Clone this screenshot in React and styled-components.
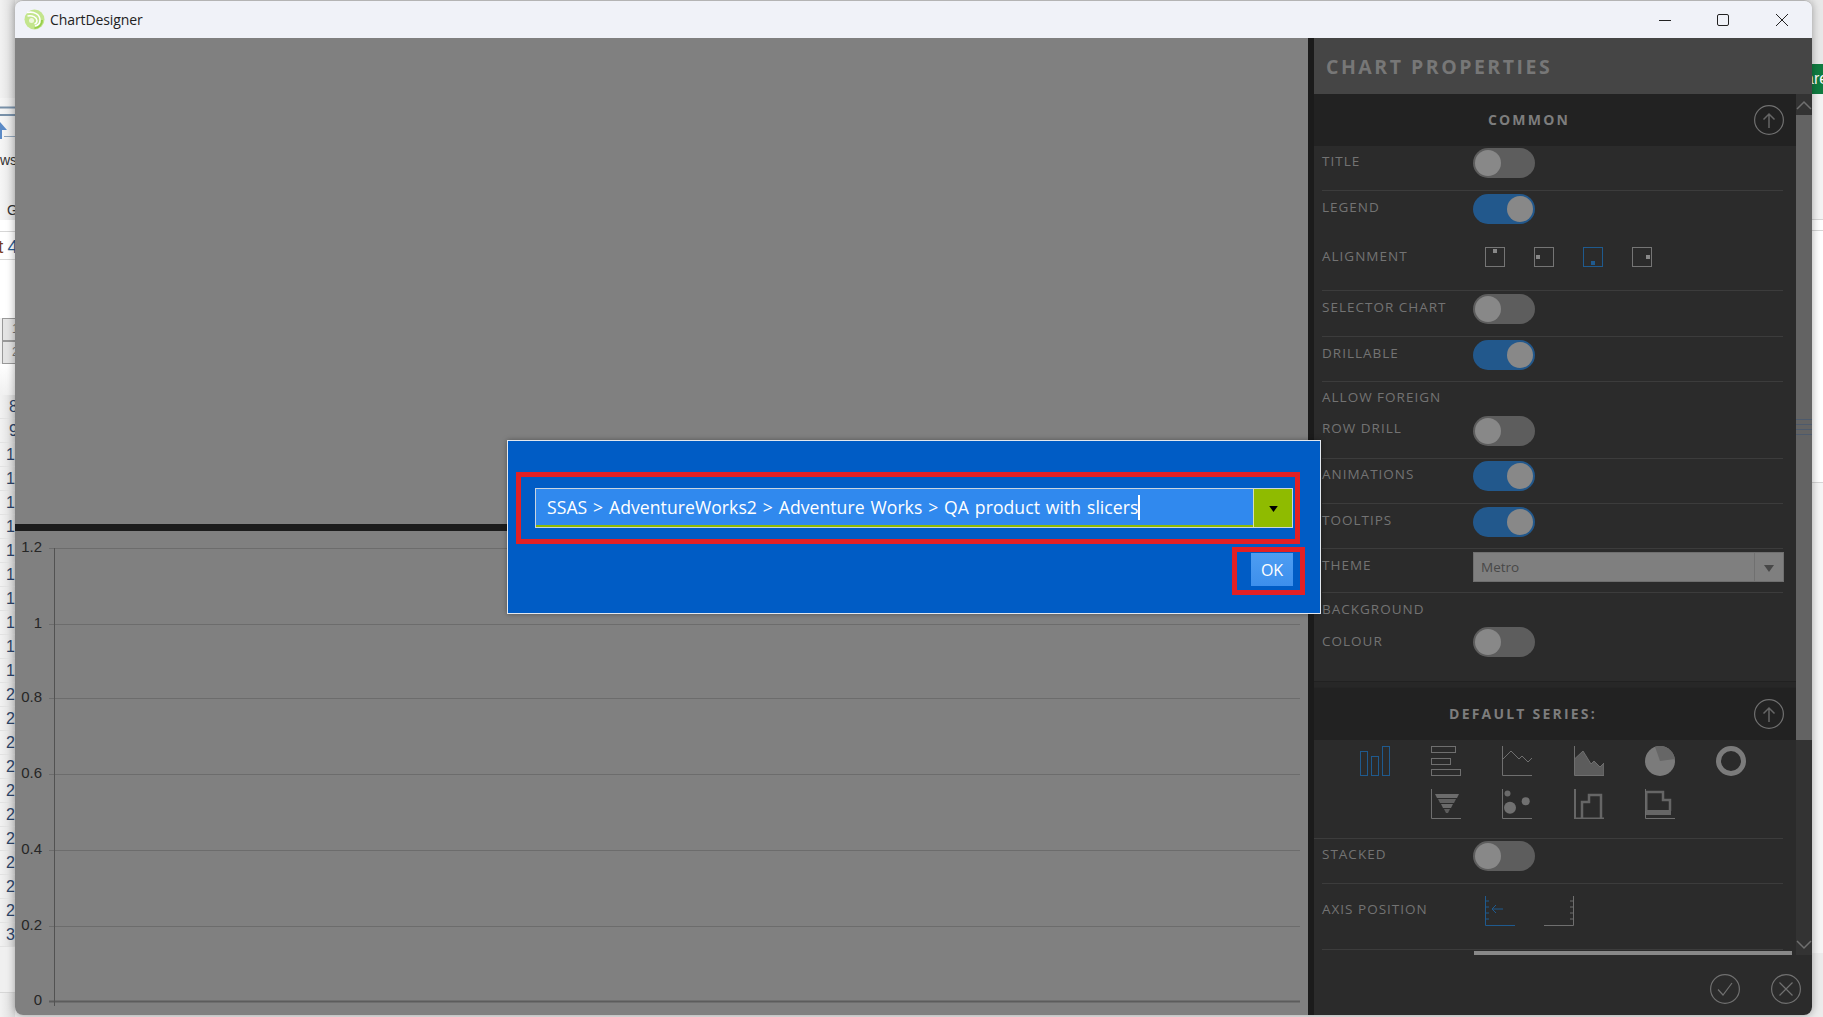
import React from 'react'
import styled, { createGlobalStyle } from 'styled-components'

const Global = createGlobalStyle`
  html, body { margin: 0; padding: 0; }
  body { background: #ececec; font-family: "Open Sans", "Noto Sans", sans-serif; overflow: hidden; }
  * { box-sizing: border-box; }
`

const Desktop = styled.div`
  display: flex;
  width: 1823px;
  height: 1017px;
  overflow: hidden;
`

/* bits of the app behind the window */
const LeftStrip = styled.div`
  width: 15px;
  flex: none;
  display: flex;
  flex-direction: column;
  overflow: hidden;
  font-family: "Liberation Sans", sans-serif;
  background: linear-gradient(90deg, #f2f2f2, #dcdcdc);
`

const StripGap = styled.div`
  height: ${p => p.$h}px;
  flex: none;
  background: ${p => p.$bg || 'transparent'};
  border-bottom: ${p => (p.$line ? '1px solid #d6d6d6' : 'none')};
`

const Ribbon = styled.div`
  height: 122px;
  flex: none;
  background: linear-gradient(90deg, #f6f6f6, #e4e4e4);
  display: flex;
  flex-direction: column;
  font-size: 14px;
  color: #333;
`

const RibbonIcon = styled.svg`
  flex: none;
`

const RibbonWord = styled.div`
  height: ${p => p.$h}px;
  flex: none;
  padding-left: ${p => p.$left}px;
  white-space: nowrap;
  line-height: 16px;
`

const TabText = styled.div`
  height: 28px;
  flex: none;
  background: #fff;
  border-bottom: 1px solid #d8d8d8;
  font-size: 19px;
  line-height: 30px;
  white-space: nowrap;
  text-indent: -2px;
  word-spacing: -1px;
  color: #7a3a1a;
  span { color: #2a5a90; }
`

const LevelBox = styled.div`
  height: 23px;
  flex: none;
  margin-left: 2px;
  border: 1px solid #999;
  border-right: none;
  background: #e4e4e4;
  color: #777;
  font-size: 12px;
  line-height: 21px;
  padding-left: 9px;
`

const RowNumber = styled.div`
  height: 24px;
  flex: none;
  padding-left: ${p => p.$left}px;
  border-bottom: 1px solid #e2e2e2;
  font-size: 16px;
  line-height: 24px;
  color: #2d4468;
  white-space: nowrap;
`

const RightStrip = styled.div`
  width: 11px;
  flex: none;
  display: flex;
  flex-direction: column;
  overflow: hidden;
  font-family: "Liberation Sans", sans-serif;
`

const GreenTab = styled.div`
  height: 30px;
  flex: none;
  background: #107c41;
  color: #fff;
  font-size: 16px;
  line-height: 30px;
  white-space: nowrap;
  text-indent: -7px;
`

/* window */
const Window = styled.div`
  width: 1797px;
  height: 1015px;
  flex: none;
  display: flex;
  flex-direction: column;
  border-top: 1px solid #b4b4b4;
  border-radius: 8px;
  overflow: hidden;
  box-shadow: 0 0 8px rgba(0, 0, 0, 0.35);
  position: relative;
  z-index: 1;
`

const TitleBar = styled.div`
  height: 37px;
  flex: none;
  display: flex;
  align-items: center;
  padding-left: 9px;
  background: #f0f2f8;
`

const AppName = styled.span`
  margin-left: 5px;
  font-size: 14px;
  color: #222;
  letter-spacing: -0.1px;
`

const Controls = styled.div`
  margin-left: auto;
  display: flex;
  align-items: center;
  gap: 46px;
  padding-right: 24px;
`

const CloseSlot = styled.span`
  display: flex;
  margin-left: 1px;
`

const Main = styled.div`
  flex: 1;
  display: flex;
  position: relative;
  min-height: 0;
`

const ChartArea = styled.div`
  width: 1293px;
  flex: none;
  display: flex;
  flex-direction: column;
  background: #808080;
`

const TopPane = styled.div`
  height: 486px;
  flex: none;
`

const Splitter = styled.div`
  height: 7px;
  flex: none;
  background: #1c1c1c;
`

/* properties panel */
const Panel = styled.div`
  flex: 1;
  display: flex;
  flex-direction: column;
  background: #2b2b2b;
  border-left: 6px solid #1b1b1b;
  color: #757575;
`

const PanelHeader = styled.div`
  height: 56px;
  flex: none;
  padding-left: 12px;
  background: #454545;
  font-size: 19.5px;
  font-weight: 700;
  letter-spacing: 2.5px;
  line-height: 57px;
  color: #777;
`

const PanelBody = styled.div`
  height: 861px;
  flex: none;
  display: flex;
`

const Content = styled.div`
  width: 482px;
  flex: none;
  display: flex;
  flex-direction: column;
`

const SectionHead = styled.div`
  height: 52px;
  flex: none;
  display: flex;
  align-items: center;
  padding-right: 12px;
  background: #222;
`

const SectionTitle = styled.div`
  flex: 1;
  margin-top: -2px;
  padding-right: ${p => p.$shift}px;
  text-align: center;
  font-size: 14px;
  font-weight: 700;
  letter-spacing: 2.2px;
  color: #7d7d7d;
`

const SectionGap = styled.div`
  height: 7px;
  flex: none;
  background: #272727;
  border-top: 1px solid #212121;
  border-bottom: 1px solid #252525;
`

const Row = styled.div`
  height: ${p => p.$h}px;
  flex: none;
  display: flex;
  align-items: flex-start;
  margin: 0 13px 0 8px;
  padding-top: ${p => p.$pt || 0}px;
  border-bottom: ${p => (p.$plain ? 'none' : '1px solid #3c3c3c')};
`

const Label = styled.div`
  width: 151px;
  flex: none;
  font-size: 13.5px;
  line-height: ${p => p.$lh || 27}px;
  letter-spacing: 1px;
  color: #737373;
  white-space: nowrap;
`

const Toggle = styled.div`
  width: 62px;
  height: 30px;
  flex: none;
  display: flex;
  align-items: center;
  justify-content: ${p => (p.$on ? 'flex-end' : 'flex-start')};
  margin-top: ${p => p.$top || 0}px;
  padding: 0 2px;
  border-radius: 15px;
  background: ${p => (p.$on ? '#22588c' : '#5d5d5d')};
`

const Knob = styled.div`
  width: 26px;
  height: 26px;
  border-radius: 50%;
  background: #888;
`

const IconRow = styled.div`
  display: flex;
  gap: ${p => p.$gap}px;
  margin: ${p => p.$top || 0}px 0 0 12px;
`

const Select = styled.div`
  width: 311px;
  height: 30px;
  flex: none;
  display: flex;
  background: #7f7f7f;
  border: 1px solid #6f6f6f;
  color: #484848;
  font-size: 13.5px;
  line-height: 28px;
`

const SelectValue = styled.div`
  flex: 1;
  padding-left: 7px;
`

const SelectArrow = styled.div`
  width: 29px;
  flex: none;
  display: flex;
  align-items: center;
  justify-content: center;
  padding-top: 3px;
  border-left: 1px solid #707070;
`

const SeriesGrid = styled.div`
  height: 99px;
  flex: none;
  display: grid;
  grid-template-columns: repeat(6, 71.2px);
  grid-auto-rows: 30px;
  row-gap: 13px;
  padding: 6px 0 0 46px;
  margin-right: 13px;
  border-bottom: 1px solid #3c3c3c;
`

const SeriesCell = styled.div`
  grid-column: ${p => p.$col};
  display: flex;
`

const HScroll = styled.div`
  width: 318px;
  height: 4px;
  flex: none;
  margin: 1px 0 0 160px;
  background: #888;
`

const VScroll = styled.div`
  width: 16px;
  flex: none;
  display: flex;
  flex-direction: column;
  background: #333;
`

const ScrollArrow = styled.div`
  height: 21px;
  flex: none;
  display: flex;
  align-items: center;
  justify-content: center;
  margin-top: ${p => (p.$end ? 'auto' : '0')};
`

const Thumb = styled.div`
  height: 625px;
  flex: none;
  display: flex;
  align-items: center;
  background: #636363;
`

const Grip = styled.div`
  width: 100%;
  height: 17px;
  background: repeating-linear-gradient(180deg, #4d5a6c 0 1px, transparent 1px 5px);
`

const PanelFooter = styled.div`
  flex: 1;
  display: flex;
  justify-content: flex-end;
  gap: 31px;
  padding: 19px 11px 0 0;
`

/* connection dialog */
const Dialog = styled.div`
  position: absolute;
  left: 492px;
  top: 402px;
  width: 814px;
  height: 174px;
  display: flex;
  flex-direction: column;
  align-items: flex-start;
  padding: 31px 0 0 8px;
  background: #005cc5;
  border: 1px solid #e4e8ee;
  box-shadow: 0 0 5px rgba(0, 0, 0, 0.35);
`

const Callout = styled.div`
  width: ${p => p.$w}px;
  height: ${p => p.$h}px;
  flex: none;
  display: flex;
  border: 5px solid #e32024;
`

const ComboWrap = styled(Callout)`
  align-items: center;
  padding: 0 2px 0 14px;
`

const OkWrap = styled(Callout)`
  align-self: flex-end;
  justify-content: flex-end;
  margin: 3px 15px 0 0;
  padding: 1px 7px 0 0;
`

const Combo = styled.div`
  width: 758px;
  height: 40px;
  display: flex;
  border: 1px solid #c9d4e0;
`

const ComboText = styled.div`
  flex: 1;
  display: flex;
  align-items: center;
  padding-left: 11px;
  background: #3089ee;
  border-bottom: 2px solid #8fbb00;
  color: #fff;
  font-size: 17.6px;
  letter-spacing: 0.05px;
  word-spacing: 1.2px;
  white-space: nowrap;
`

const Caret = styled.span`
  width: 2px;
  height: 25px;
  flex: none;
  background: #fff;
`

const ComboButton = styled.div`
  width: 39px;
  flex: none;
  display: flex;
  align-items: center;
  justify-content: center;
  padding-top: 2px;
  background: #8fbb00;
  border-left: 1px solid #d5e0b0;
`

const OkButton = styled.div`
  width: 42px;
  height: 33px;
  display: flex;
  align-items: center;
  justify-content: center;
  background: linear-gradient(180deg, #4d9df2, #3d8fec);
  color: #fff;
  font-size: 16px;
`

const GRAY = '#6f6f6f'
const BLUE = '#1f5a8e'

const Logo = () => (
  <svg width="21" height="21" viewBox="0 0 21 21" fill="none">
    <circle cx="10.5" cy="10.5" r="10" fill="#c3e58d" />
    <path d="M18 11a7.500 7.500 0 0 1-7.500 8" stroke="#97cf4a" strokeWidth="2" />
    <path d="M3 3.500c7-1.500 13 2 13 7.500 0 3.500-2.500 5.500-5 6" stroke="#fff" strokeWidth="1.500" />
    <path d="M3.500 7c5-1 9 1 9.500 4.500 0 2-1 3-2.500 3.500" stroke="#fff" strokeWidth="1.500" />
    <circle cx="7.500" cy="11.500" r="2.500" fill="#eef8dc" />
  </svg>
)

const MinIcon = () => (
  <svg width="12" height="12" viewBox="0 0 12 12"><path d="M0 6.5h12" stroke="#222" strokeWidth="1" /></svg>
)
const MaxIcon = () => (
  <svg width="12" height="12" viewBox="0 0 12 12"><rect x=".5" y=".5" width="11" height="11" rx="1.5" fill="none" stroke="#222" /></svg>
)
const CloseIcon = () => (
  <svg width="12" height="12" viewBox="0 0 12 12"><path d="M0 0l12 12M12 0L0 12" stroke="#222" strokeWidth="1" /></svg>
)

const RoundIcon = ({ children }) => (
  <svg width="30" height="30" viewBox="0 0 30 30" fill="none" stroke="#707070" strokeWidth="1.2">
    <circle cx="15" cy="15" r="14.4" />
    {children}
  </svg>
)

const UpCircle = () => (
  <RoundIcon>
    <path d="M15 23V9M9.5 14.5L15 9l5.500 5.500" strokeWidth="1.500" stroke="#666" />
  </RoundIcon>
)

const AlignIcon = ({ x, y, active }) => {
  const c = active ? BLUE : '#757575'
  return (
    <svg width="20" height="20" viewBox="0 0 20 20">
      <rect x=".5" y=".5" width="19" height="19" fill="none" stroke={c} />
      <rect x={x} y={y} width="4" height="4" fill={active ? BLUE : '#888'} />
    </svg>
  )
}

const Axes = () => <path d="M.5 0v29.500H30" fill="none" stroke={GRAY} />

const SeriesIcon = ({ children, color }) => (
  <svg width="30" height="30" viewBox="0 0 30 30" fill="none" stroke={color || GRAY}>
    {children}
  </svg>
)

const BarsIcon = () => (
  <SeriesIcon color={BLUE}>
    <rect x=".5" y="5.500" width="7" height="24" />
    <rect x="11.500" y="10.500" width="7" height="19" />
    <rect x="22.500" y=".5" width="7" height="29" />
  </SeriesIcon>
)
const HBarsIcon = () => (
  <SeriesIcon>
    <rect x=".5" y=".5" width="24" height="6" />
    <rect x=".5" y="12.500" width="19" height="6" />
    <rect x=".5" y="23.500" width="29" height="6" />
  </SeriesIcon>
)
const LineIcon = () => (
  <SeriesIcon>
    <Axes />
    <path d="M1 13l8-8 8 8 3-3 6 6 4-4" />
  </SeriesIcon>
)
const AreaIcon = () => (
  <SeriesIcon>
    <path d="M.5 0v29.500H30V17l-4 4-6-6-3 3-8-13-8.500 8z" fill="#5c5c5c" stroke={GRAY} />
  </SeriesIcon>
)
const PieIcon = () => (
  <svg width="30" height="30" viewBox="0 0 30 30">
    <circle cx="15" cy="15" r="15" fill="#7b7b7b" />
    <path d="M15 15L10 .8A15 15 0 0 1 29.800 13z" fill="#666" />
  </svg>
)
const DonutIcon = () => (
  <svg width="30" height="30" viewBox="0 0 30 30">
    <circle cx="15" cy="15" r="12.500" fill="none" stroke="#7b7b7b" strokeWidth="5" />
  </svg>
)
const FunnelIcon = () => (
  <SeriesIcon>
    <Axes />
    <path d="M4 5h24l-2 4H6z" fill="#6c6c6c" stroke="none" />
    <path d="M7 10h18l-2 4H9z" fill="#606060" stroke="none" />
    <path d="M10 15h12l-2 4h-8z" fill="#6a6a6a" stroke="none" />
    <path d="M13 20h6l-2 4h-2z" fill="#5c5c5c" stroke="none" />
  </SeriesIcon>
)
const BubbleIcon = () => (
  <SeriesIcon>
    <Axes />
    <circle cx="5.500" cy="4.500" r="3" fill="#6a6a6a" stroke="none" />
    <circle cx="8" cy="18.700" r="6" fill="#707070" stroke="none" />
    <circle cx="23.700" cy="12.300" r="4" fill="#707070" stroke="none" />
  </SeriesIcon>
)
const StepIcon = () => (
  <SeriesIcon>
    <path d="M1 0v29.500H30" strokeWidth="2" stroke="#666" />
    <path d="M8 29V13H15V6H27V29" strokeWidth="2.500" stroke="#666" />
  </SeriesIcon>
)
const HStepIcon = () => (
  <SeriesIcon>
    <Axes />
    <path d="M1 3H18V11H25V22" strokeWidth="2.500" stroke="#666" />
    <path d="M1 21h25v5H1z" fill="#666" stroke="none" />
    <path d="M1.500 3v19" strokeWidth="2" stroke="#666" />
  </SeriesIcon>
)

const AxisLeftIcon = () => (
  <SeriesIcon color={BLUE}>
    <path d="M.5 0v29.500H30M1 5h3M1 11h3M1 17h3M1 23h3M7 13h11M11 9l-4 4 4 4" />
  </SeriesIcon>
)
const AxisRightIcon = () => (
  <SeriesIcon>
    <path d="M0 29.500h29.500V0M29 5h-3M29 11h-3M29 17h-3M29 23h-3" />
  </SeriesIcon>
)

const Chevron = ({ up }) => (
  <svg width="16" height="10" viewBox="0 0 16 10">
    <path d={up ? 'M1 9l7-7 7 7' : 'M1 1l7 7 7-7'} fill="none" stroke="#6f6f6f" strokeWidth="1.500" />
  </svg>
)

const Triangle = ({ color, w, h }) => (
  <svg width={w} height={h} viewBox="0 0 10 7"><path d="M0 0h10L5 7z" fill={color} /></svg>
)

const TICKS = [
  ['1.2', 17],
  ['1', 93],
  ['0.8', 167],
  ['0.6', 243],
  ['0.4', 319],
  ['0.2', 395],
  ['0', 470],
]

const ChartPane = () => (
  <svg width="1293" height="484" viewBox="0 0 1293 484">
    {TICKS.map(([label, y]) => (
      <g key={label}>
        <path d={`M34 ${y + 0.5}H1285`} stroke={label === '0' ? '#5c5c5c' : '#6c6c6c'} strokeWidth={label === '0' ? 2 : 1} />
        <text x="27" y={y + 4} textAnchor="end" fontFamily="Liberation Sans, sans-serif" fontSize="15" fill="#262626">
          {label}
        </text>
      </g>
    ))}
    <path d="M39.500 17V475" stroke="#525252" />
  </svg>
)

const ROW_NUMBERS = Array.from({ length: 23 }, (_, i) => i + 8)

const Switch = ({ on, top }) => (
  <Toggle $on={on} $top={top}><Knob /></Toggle>
)

export default function App() {
  return (
    <Desktop>
      <Global />
      <LeftStrip>
        <StripGap $h={98} />
        <Ribbon>
          <RibbonIcon width="15" height="54" viewBox="0 0 15 54">
            <path d="M0 9.500h15M0 17h15" stroke="#7890a8" strokeWidth="2" />
            <path d="M7 33H2v9H0V25z" fill="#5b8ac6" transform="translate(0 -1)" />
            <path d="M4 38.500h11" stroke="#8fa3b8" />
          </RibbonIcon>
          <RibbonWord $h={50} $left={0}>ws</RibbonWord>
          <RibbonWord $h={18} $left={7}>G</RibbonWord>
        </Ribbon>
        <StripGap $h={12} $bg="#fff" $line />
        <TabText>t<span> 4</span></TabText>
        <StripGap $h={58} $bg="#fff" />
        <LevelBox>1</LevelBox>
        <LevelBox>2</LevelBox>
        <StripGap $h={31} $bg="linear-gradient(180deg,#fff,#f0f0f0)" />
        {ROW_NUMBERS.map(n => (
          <RowNumber key={n} $left={n < 10 ? 9 : 6}>{n}</RowNumber>
        ))}
        <StripGap $h={46} $bg="#f0f0f0" $line />
      </LeftStrip>

      <Window>
        <TitleBar>
          <Logo />
          <AppName>ChartDesigner</AppName>
          <Controls>
            <MinIcon />
            <MaxIcon />
            <CloseSlot><CloseIcon /></CloseSlot>
          </Controls>
        </TitleBar>
        <Main>
          <ChartArea>
            <TopPane />
            <Splitter />
            <ChartPane />
          </ChartArea>
          <Panel>
            <PanelHeader>CHART PROPERTIES</PanelHeader>
            <PanelBody>
              <Content>
                <SectionHead>
                  <SectionTitle $shift={10}>COMMON</SectionTitle>
                  <UpCircle />
                </SectionHead>
                <Row $h={45} $pt={2}><Label>TITLE</Label><Switch /></Row>
                <Row $h={49} $pt={3} $plain><Label>LEGEND</Label><Switch on /></Row>
                <Row $h={51} $pt={3}>
                  <Label>ALIGNMENT</Label>
                  <IconRow $gap={29} $top={4}>
                    <AlignIcon x={8} y={2} />
                    <AlignIcon x={2} y={8} />
                    <AlignIcon x={8} y={14} active />
                    <AlignIcon x={14} y={8} />
                  </IconRow>
                </Row>
                <Row $h={46} $pt={3}><Label>SELECTOR CHART</Label><Switch /></Row>
                <Row $h={45} $pt={3}><Label>DRILLABLE</Label><Switch on /></Row>
                <Row $h={77}>
                  <Label $lh={31}>ALLOW FOREIGN<br />ROW DRILL</Label>
                  <Switch top={34} />
                </Row>
                <Row $h={45} $pt={2}><Label>ANIMATIONS</Label><Switch on /></Row>
                <Row $h={45} $pt={3}><Label>TOOLTIPS</Label><Switch on /></Row>
                <Row $h={44} $pt={3}>
                  <Label>THEME</Label>
                  <Select>
                    <SelectValue>Metro</SelectValue>
                    <SelectArrow><Triangle color="#484848" w={10} h={7} /></SelectArrow>
                  </Select>
                </Row>
                <Row $h={88} $plain>
                  <Label $lh={32}>BACKGROUND<br />COLOUR</Label>
                  <Switch top={34} />
                </Row>
                <SectionGap />
                <SectionHead>
                  <SectionTitle $shift={22}>DEFAULT SERIES:</SectionTitle>
                  <UpCircle />
                </SectionHead>
                <SeriesGrid>
                  <SeriesCell $col={1}><BarsIcon /></SeriesCell>
                  <SeriesCell $col={2}><HBarsIcon /></SeriesCell>
                  <SeriesCell $col={3}><LineIcon /></SeriesCell>
                  <SeriesCell $col={4}><AreaIcon /></SeriesCell>
                  <SeriesCell $col={5}><PieIcon /></SeriesCell>
                  <SeriesCell $col={6}><DonutIcon /></SeriesCell>
                  <SeriesCell $col={2}><FunnelIcon /></SeriesCell>
                  <SeriesCell $col={3}><BubbleIcon /></SeriesCell>
                  <SeriesCell $col={4}><StepIcon /></SeriesCell>
                  <SeriesCell $col={5}><HStepIcon /></SeriesCell>
                </SeriesGrid>
                <Row $h={45} $pt={2}><Label>STACKED</Label><Switch /></Row>
                <Row $h={66} $pt={12}>
                  <Label>AXIS POSITION</Label>
                  <IconRow $gap={29}>
                    <AxisLeftIcon />
                    <AxisRightIcon />
                  </IconRow>
                </Row>
                <HScroll />
              </Content>
              <VScroll>
                <ScrollArrow><Chevron up /></ScrollArrow>
                <Thumb><Grip /></Thumb>
                <ScrollArrow $end><Chevron /></ScrollArrow>
              </VScroll>
            </PanelBody>
            <PanelFooter>
              <RoundIcon><path d="M8 15.500l5 5.500 9-12" /></RoundIcon>
              <RoundIcon><path d="M8.500 8.500l13 13M21.500 8.500l-13 13" /></RoundIcon>
            </PanelFooter>
          </Panel>

          <Dialog>
            <ComboWrap $w={784} $h={72}>
              <Combo>
                <ComboText>
                  SSAS &gt; AdventureWorks2 &gt; Adventure Works &gt; QA product with slicers
                  <Caret />
                </ComboText>
                <ComboButton><Triangle color="#000" w={9} h={6} /></ComboButton>
              </Combo>
            </ComboWrap>
            <OkWrap $w={73} $h={48}>
              <OkButton>OK</OkButton>
            </OkWrap>
          </Dialog>
        </Main>
      </Window>

      <RightStrip>
        <StripGap $h={64} $bg="#e8e8e8" />
        <GreenTab>are</GreenTab>
        <StripGap $h={126} $bg="#f4f4f4" $line />
        <StripGap $h={11} $bg="#fff" $line />
        <StripGap $h={252} $bg="#fff" $line />
        <StripGap $h={470} $bg="#f6f6f6" />
      </RightStrip>
    </Desktop>
  )
}
